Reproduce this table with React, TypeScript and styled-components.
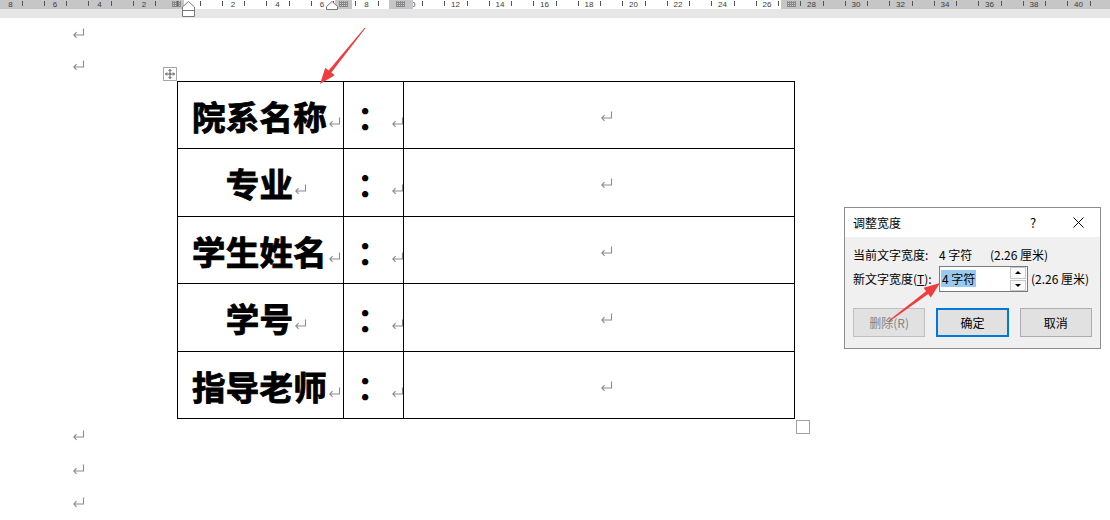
import React from 'react';
import styled, { createGlobalStyle } from 'styled-components';

const GlobalStyle = createGlobalStyle`
  html, body {
    margin: 0;
    padding: 0;
    background: #fff;
  }
  body {
    width: 1110px;
    height: 520px;
    overflow: hidden;
    font-family: "Noto Sans CJK SC", "Liberation Sans", sans-serif;
  }
`;

const Page = styled.div`
  position: relative;
  width: 1110px;
  height: 520px;
  overflow: hidden;
  background: #fff;
`;

/* ---------- ruler ---------- */

const RulerWrap = styled.div`
  position: relative;
  height: 18px;
`;

const RulerBar = styled.div`
  position: relative;
  display: flex;
  height: 9px;
  overflow: hidden;
`;

const Seg = styled.div<{ $w: number; $tone: 'margin' | 'text' | 'cell' }>`
  flex: 0 0 ${(p) => p.$w}px;
  height: 100%;
  background: ${(p) => (p.$tone === 'text' ? '#ffffff' : '#c6c6c6')};
  position: ${(p) => (p.$tone === 'cell' ? 'relative' : 'static')};
  z-index: ${(p) => (p.$tone === 'cell' ? 1 : 'auto')};
`;

const GridMark = styled.span`
  position: absolute;
  top: 1px;
  width: 9px;
  height: 6px;
  z-index: 2;
  background-image:
    repeating-linear-gradient(90deg, #7a7a7a 0 1px, transparent 1px 2px),
    repeating-linear-gradient(0deg, #7a7a7a 0 1px, transparent 1px 2px);
  opacity: 0.8;
`;

const Tick = styled.span`
  position: absolute;
  top: 1px;
  width: 1px;
  height: 5px;
  background: #555;
`;

const TickLabel = styled.span`
  position: absolute;
  top: 0;
  transform: translateX(-50%);
  font: 8px/9px "Liberation Sans", Arial, sans-serif;
  color: #3c3c3c;
`;

const Strip = styled.div`
  height: 9px;
  background: #e6e6e6;
`;

const IndentMarker = styled.svg`
  position: absolute;
  z-index: 3;
`;

/* ---------- document ---------- */

const Para = styled.div<{ $h: number }>`
  height: ${(p) => p.$h}px;
  padding-left: 72px;
  display: flex;
  align-items: center;
`;

const MarkSvg = styled.svg<{ $float?: boolean; $lift?: number }>`
  display: block;
  flex: none;
  ${(p) =>
    p.$float
      ? `position: absolute; left: calc(100% + 1px); bottom: ${p.$lift ?? 4}px;`
      : ''}
`;

function ReturnMark({ float, lift }: { float?: boolean; lift?: number }) {
  return (
    <MarkSvg $float={float} $lift={lift} width="13" height="11" viewBox="0 0 13 11">
      <path
        d="M11.5 0.5 V7 H1.8 M4.6 4.2 L1.8 7 L4.6 9.8"
        fill="none"
        stroke="#8c8c8c"
        strokeWidth="1.1"
      />
    </MarkSvg>
  );
}

const TableWrap = styled.div`
  position: relative;
  margin-left: 177px;
  width: max-content;
`;

const Grid = styled.div`
  display: grid;
  grid-template-columns: 166px 60px 391px;
  grid-template-rows: 67px 68px 67px 68px 67px;
  border-top: 1px solid #000;
  border-left: 1px solid #000;
`;

const Cell = styled.div`
  box-sizing: border-box;
  border-right: 1px solid #000;
  border-bottom: 1px solid #000;
  display: flex;
  align-items: center;
  justify-content: center;
  overflow: hidden;
`;

const Label = styled.span<{ $empty?: boolean; $light?: boolean }>`
  position: relative;
  display: inline-block;
  width: ${(p) => (p.$empty ? '0' : 'auto')};
  height: 33px;
  margin-left: ${(p) => (p.$empty || p.$light ? '0' : '-2px')};
  font-family: "Noto Sans CJK SC", sans-serif;
  font-weight: 700;
  font-size: 33.5px;
  line-height: 33px;
  letter-spacing: 0.2px;
  color: #000;
  -webkit-text-stroke: ${(p) => (p.$light ? '0' : '0.9px #000')};
  white-space: nowrap;
`;

const MoveHandle = styled.div`
  position: absolute;
  left: -14px;
  top: -14px;
  width: 14px;
  height: 14px;
  box-sizing: border-box;
  border: 1px solid #a6a6a6;
  background: #fff;
  display: flex;
  align-items: center;
  justify-content: center;
`;

const SizeHandle = styled.div`
  position: absolute;
  right: -15px;
  bottom: -15px;
  width: 14px;
  height: 14px;
  box-sizing: border-box;
  border: 1px solid #a0a0a0;
  background: #fff;
`;

/* ---------- dialog ---------- */

const Dialog = styled.div`
  position: absolute;
  left: 844px;
  top: 207px;
  width: 257px;
  height: 142px;
  box-sizing: border-box;
  border: 1px solid #8c8c8c;
  background: #f0f0f0;
  display: flex;
  flex-direction: column;
  font: 12px/16px "Noto Sans CJK SC", sans-serif;
  color: #000;
`;

const TitleBar = styled.div`
  height: 29px;
  background: #fff;
  display: flex;
  align-items: center;
  padding-left: 8px;
`;

const Title = styled.span`
  flex: 1;
`;

const TitleButton = styled.span<{ $w: number }>`
  width: ${(p) => p.$w}px;
  height: 100%;
  display: flex;
  align-items: center;
  justify-content: center;
  font-size: 13px;
`;

const Body = styled.div`
  padding: 10px 8px 0 8px;
  display: flex;
  flex-direction: column;
`;

const Row = styled.div<{ $h: number; $mt?: number }>`
  display: flex;
  align-items: center;
  height: ${(p) => p.$h}px;
  margin-top: ${(p) => p.$mt ?? 0}px;
  white-space: nowrap;
`;

const Field = styled.span<{ $w: number }>`
  flex: 0 0 ${(p) => p.$w}px;
`;

const Input = styled.div`
  box-sizing: border-box;
  width: 89px;
  height: 26px;
  border: 1px solid #7a7a7a;
  background: #fff;
  display: flex;
  align-items: center;
  margin-right: 3px;
`;

const InputText = styled.span`
  flex: 1;
  padding-left: 1px;
`;

const Selected = styled.span`
  background: #99c9ef;
  padding: 0 1px;
`;

const Spinner = styled.div`
  width: 16px;
  height: 24px;
  display: flex;
  flex-direction: column;
  gap: 1px;
  padding: 0 1px 0 0;
`;

const SpinButton = styled.div`
  flex: 1;
  box-sizing: border-box;
  border: 1px solid #c8c8c8;
  background: #fafafa;
  display: flex;
  align-items: center;
  justify-content: center;
`;

const Arrow = styled.span<{ $dir: 'up' | 'down' }>`
  width: 0;
  height: 0;
  border-left: 3px solid transparent;
  border-right: 3px solid transparent;
  ${(p) => (p.$dir === 'up' ? 'border-bottom: 3px solid #000;' : 'border-top: 3px solid #000;')}
`;

const Buttons = styled.div`
  display: flex;
  gap: 11px;
  margin-top: 16px;
`;

const Button = styled.div<{ $variant?: 'primary' | 'disabled' }>`
  box-sizing: border-box;
  width: 73px;
  height: 29px;
  display: flex;
  align-items: center;
  justify-content: center;
  background: #e1e1e1;
  border: ${(p) => (p.$variant === 'primary' ? '2px solid #0078d7' : '1px solid #adadad')};
  border-color: ${(p) => (p.$variant === 'disabled' ? '#bfbfbf' : undefined)};
  color: ${(p) => (p.$variant === 'disabled' ? '#838383' : '#000')};
`;

const Overlay = styled.svg`
  position: absolute;
  left: 0;
  top: 0;
  pointer-events: none;
  z-index: 10;
`;

/* ---------- data ---------- */

const ZERO = 188.5;
const rulerLabels = Array.from({ length: 25 }, (_, i) => i - 4)
  .filter((k) => k !== 0)
  .map((k) => ({ x: ZERO + k * 44.5, t: String(Math.abs(2 * k)) }));
const rulerTicks = Array.from({ length: 52 }, (_, i) => ZERO + 11.125 + 22.25 * (i - 9)).filter(
  (x) => x > 0 && x < 1110,
);

const segments: { w: number; tone: 'margin' | 'text' | 'cell'; mark?: number }[] = [
  { w: 184, tone: 'margin' },
  { w: 151, tone: 'text' },
  { w: 17, tone: 'cell', mark: 4 },
  { w: 37, tone: 'text' },
  { w: 24, tone: 'cell', mark: 7 },
  { w: 368, tone: 'text' },
  { w: 329, tone: 'margin' },
];

const rows = ['院系名称', '专业', '学生姓名', '学号', '指导老师'];

export default function App() {
  return (
    <Page>
      <GlobalStyle />

      <RulerWrap>
        <RulerBar>
          {segments.map((s, i) => (
            <Seg key={i} $w={s.w} $tone={s.tone}>
              {s.mark !== undefined && <GridMark style={{ left: s.mark }} />}
            </Seg>
          ))}
          {rulerTicks.map((x) => (
            <Tick key={x} style={{ left: Math.round(x) }} />
          ))}
          {rulerLabels.map((l) => (
            <TickLabel key={l.x} style={{ left: l.x }}>
              {l.t}
            </TickLabel>
          ))}
          <GridMark style={{ left: 172 }} />
          <GridMark style={{ left: 787 }} />
        </RulerBar>
        <Strip />
        <IndentMarker width="13" height="17" viewBox="0 0 13 17" style={{ left: 182, top: 1 }}>
          <path
            d="M6.5 0.5 L12.5 6 V9.5 H0.5 V6 Z M0.5 9.5 H12.5 V15.5 H0.5 Z"
            fill="#fff"
            stroke="#7a7a7a"
          />
        </IndentMarker>
        <IndentMarker width="12" height="10" viewBox="0 0 12 10" style={{ left: 326, top: 1 }}>
          <path d="M6 0.5 L11.5 5.5 V8.5 H0.5 V5.5 Z" fill="#fff" stroke="#7a7a7a" />
        </IndentMarker>
      </RulerWrap>

      <Para $h={31}>
        <ReturnMark />
      </Para>
      <Para $h={32}>
        <ReturnMark />
      </Para>

      <TableWrap>
        <MoveHandle>
          <svg width="12" height="12" viewBox="0 0 12 12">
            <path
              d="M6 1.5 V10.5 M1.5 6 H10.5 M4.5 3 L6 1.5 L7.5 3 M4.5 9 L6 10.5 L7.5 9 M3 4.5 L1.5 6 L3 7.5 M9 4.5 L10.5 6 L9 7.5"
              fill="none"
              stroke="#555"
            />
          </svg>
        </MoveHandle>
        <Grid>
          {rows.map((r) => (
            <React.Fragment key={r}>
              <Cell>
                <Label>
                  {r}
                  <ReturnMark float />
                </Label>
              </Cell>
              <Cell>
                <Label $light>
                  ：
                  <ReturnMark float />
                </Label>
              </Cell>
              <Cell>
                <Label $empty>
                  <ReturnMark float lift={10} />
                </Label>
              </Cell>
            </React.Fragment>
          ))}
        </Grid>
        <SizeHandle />
      </TableWrap>

      <Para $h={33.5}>
        <ReturnMark />
      </Para>
      <Para $h={33.5}>
        <ReturnMark />
      </Para>
      <Para $h={33.5}>
        <ReturnMark />
      </Para>

      <Dialog>
        <TitleBar>
          <Title>调整宽度</Title>
          <TitleButton $w={46}>?</TitleButton>
          <TitleButton $w={44}>
            <svg width="11" height="11" viewBox="0 0 11 11">
              <path d="M0.5 0.5 L10.5 10.5 M10.5 0.5 L0.5 10.5" stroke="#000" strokeWidth="1" />
            </svg>
          </TitleButton>
        </TitleBar>
        <Body>
          <Row $h={16}>
            <Field $w={86}>当前文字宽度:</Field>
            <Field $w={51}>4 字符</Field>
            <span>(2.26 厘米)</span>
          </Row>
          <Row $h={26} $mt={3}>
            <Field $w={86}>
              新文字宽度(<u>T</u>):
            </Field>
            <Input>
              <InputText>
                <Selected>4 字符</Selected>
              </InputText>
              <Spinner>
                <SpinButton>
                  <Arrow $dir="up" />
                </SpinButton>
                <SpinButton>
                  <Arrow $dir="down" />
                </SpinButton>
              </Spinner>
            </Input>
            <span>(2.26 厘米)</span>
          </Row>
          <Buttons>
            <Button $variant="disabled">删除(R)</Button>
            <Button $variant="primary">确定</Button>
            <Button>取消</Button>
          </Buttons>
        </Body>
      </Dialog>

      <Overlay width="1110" height="520" viewBox="0 0 1110 520">
        <polygon
          points="365.4,28.3 331.4,72.6 334.7,75.3 320,84 325.3,67.7 328.6,70.4 364.6,27.7"
          fill="#f03c3c"
        />
        <polygon
          points="889.3,321.4 928.2,294 930.8,297.4 940,283 923.6,287.7 926.1,291.2 888.7,320.6"
          fill="#f03c3c"
        />
      </Overlay>
    </Page>
  );
}
